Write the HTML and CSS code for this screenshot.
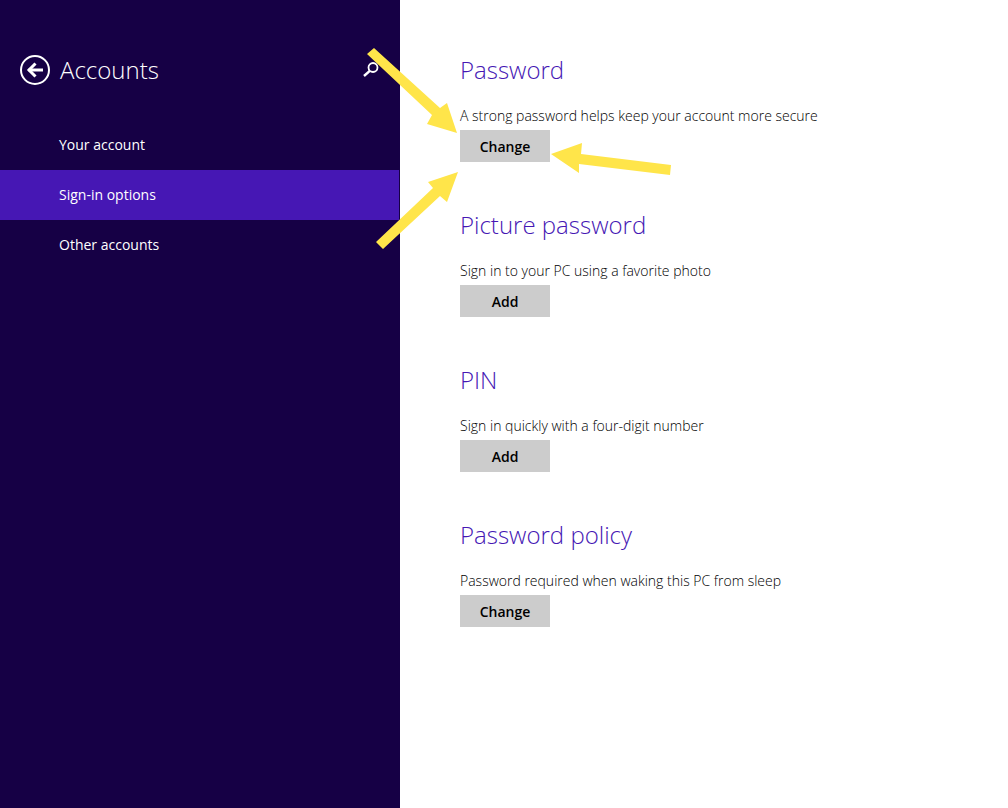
FILE: index.html
```html
<!DOCTYPE html>
<html lang="en">
<head>
    <meta charset="UTF-8">
    <meta name="viewport" content="width=device-width, initial-scale=1.0">
    <title>Accounts - PC settings</title>
    <link rel="stylesheet" href="styles.css">
</head>
<body>
    <div class="settings">
        <aside class="sidebar">
            <header class="sidebar-header">
                <button class="icon-button" type="button" aria-label="Back">
                    <svg width="30" height="30" viewBox="0 0 30 30" fill="none" stroke="#fff">
                        <circle cx="15" cy="15" r="14" stroke-width="2"/>
                        <path d="M8.5 15H23" stroke-width="3"/>
                        <path d="M15.5 8.5L9 15l6.500 6.500" stroke-width="3"/>
                    </svg>
                </button>
                <h1>Accounts</h1>
                <button class="icon-button" type="button" aria-label="Search">
                    <svg width="18" height="18" viewBox="0 0 18 18" fill="none" stroke="#fff">
                        <circle cx="11" cy="6.500" r="4.500" stroke-width="1.800"/>
                        <path d="M7.800 9.800L2 15" stroke-width="2.400"/>
                    </svg>
                </button>
            </header>
            <nav>
                <a href="#account">Your account</a>
                <a href="#signin" class="active" aria-current="page">Sign-in options</a>
                <a href="#others">Other accounts</a>
            </nav>
        </aside>

        <main class="content">
            <section>
                <h2>Password</h2>
                <p>A strong password helps keep your account more secure</p>
                <button class="btn" type="button">Change</button>
            </section>
            <section>
                <h2>Picture password</h2>
                <p>Sign in to your PC using a favorite photo</p>
                <button class="btn" type="button">Add</button>
            </section>
            <section>
                <h2>PIN</h2>
                <p>Sign in quickly with a four-digit number</p>
                <button class="btn" type="button">Add</button>
            </section>
            <section>
                <h2>Password policy</h2>
                <p>Password required when waking this PC from sleep</p>
                <button class="btn" type="button">Change</button>
            </section>
        </main>

        <!-- arrows pointing at the password Change button -->
        <svg class="arrows" width="700" height="260" viewBox="0 0 700 260" aria-hidden="true">
            <path d="M374 48L440 108L447 103L457 133L427 124L432 115L367 54Z"/>
            <path d="M376 242L433 188L428 182L458 172L447 202L440 196L383 249Z"/>
            <path d="M551 154L582 143L581 154L671 165L670 175L579 164L579 173Z"/>
        </svg>
    </div>
</body>
</html>
```
FILE: styles.css
```css
* {
    box-sizing: border-box;
}
body {
    margin: 0;
    background: #fff;
    color: #000;
    font-family: "Open Sans", "Noto Sans", sans-serif;
    font-size: 14px;
}
h1, h2, p {
    margin: 0;
}
h1, h2 {
    font-size: 24px;
    font-weight: 300;
    line-height: 40px;
}
.settings {
    position: relative;
    display: flex;
    min-height: 100vh;
}

/* left side */
.sidebar {
    flex: 0 0 400px;
    padding-top: 50px;
    background: #160045;
    color: #fff;
}
.sidebar-header {
    display: flex;
    align-items: center;
    gap: 10px;
    padding: 0 20px;
    margin-bottom: 30px;
}
.sidebar-header h1 {
    flex: 1;
}
.icon-button {
    padding: 0;
    border: none;
    background: none;
    cursor: pointer;
}
.icon-button svg {
    display: block;
}
nav a {
    display: block;
    margin-right: 1px;
    padding-left: 59px;
    line-height: 50px;
    color: #fff;
    text-decoration: none;
}
nav a.active {
    background: #4617b4;
}

/* right side */
.content {
    flex: 1;
    padding: 50px 60px;
}
.content section {
    margin-bottom: 43px;
}
.content h2 {
    margin-bottom: 16px;
    color: #4617b4;
}
.content p {
    margin-bottom: 4px;
    font-weight: 300;
    line-height: 20px;
}
.btn {
    display: block;
    width: 90px;
    height: 32px;
    padding: 0;
    border: none;
    background: #ccc;
    color: #000;
    font: inherit;
    font-weight: 600;
    cursor: pointer;
}

.arrows {
    position: absolute;
    top: 0;
    left: 0;
    fill: #ffe54a;
    pointer-events: none;
}
```
